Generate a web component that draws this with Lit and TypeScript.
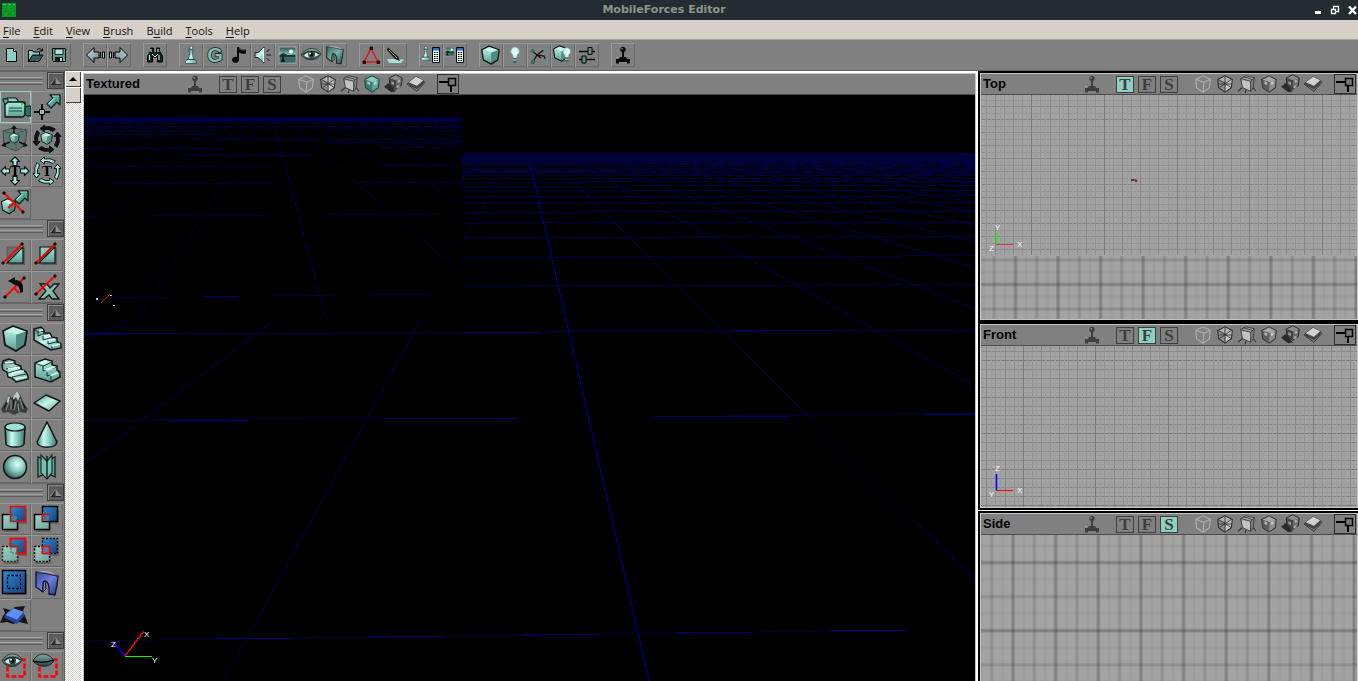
import { LitElement, html, svg, css, TemplateResult } from "lit";
import { customElement, state } from "lit/decorators.js";
import { classMap } from "lit/directives/class-map.js";

type Art = TemplateResult;
type Tool = { name: string; art: Art };

const K = "#101414";

/* ---------- shared shapes, drawn in a 32 unit box ---------- */

const cube = (a = "#c4f4ea", b = "url(#tealDown)", c = "#4f8c82") => svg`
  <path d="M4 8 14 3 28 8 17 12z" fill=${a}/>
  <path d="M4 8 17 12 17 28 6 22z" fill=${b}/>
  <path d="M17 12 28 8 26 22 17 28z" fill=${c}/>
  <path d="M4 8 14 3 28 8 26 22 17 28 6 22z" fill="none" stroke=${K} stroke-width="1.8" stroke-linejoin="round"/>`;

const pawn = svg`
  <circle cx="12" cy="5" r="2" fill="url(#ball)" stroke="#2c4a46" stroke-width=".6"/>
  <path d="M10 7h4v2h-1l1.500 7 3 2v2.500h-11V18l3-2L11 9h-1z" fill="url(#tealSide)" stroke="#2c4a46" stroke-width=".7"/>
  <path d="M8 16.500h8" stroke="#2c4a46"/>`;

const eye = svg`
  <path d="M2 12C6 4 18 3 22 11C18 18 8 19 2 12z" fill="url(#lid)" stroke="#1d2a29" stroke-width=".8"/>
  <path d="M5 12.500C8 9 16 8 20 11.500C16 15 9 16 5 12.500z" fill="#d7efeb"/>
  <circle cx="12.500" cy="11.500" r="3.400" fill="#2a3f3d"/><circle cx="12.500" cy="11.500" r="1.600" fill="#000"/>
  <circle cx="11" cy="10.500" r="1" fill="#fff"/>
  <path d="M4 11.500C8 7.500 16 7 20.500 11" fill="none" stroke="#1d2a29" stroke-width="1.200"/>`;

const arch = (fill: string, edge: string) => svg`
  <path d="M5 5Q16 6 27 9Q26 20 24 28L18 27Q19 15 14 14Q11 14 12 25L5 20z" fill=${fill} stroke=${edge} stroke-width="1.400" stroke-linejoin="round"/>
  <path d="M5 5Q13 3 20 5L27 9Q16 6 5 5z" fill="#fff" opacity=".35"/>
  <path d="M12 25 15 22Q14 17 15 14.500" fill="none" stroke=${edge}/>`;

const bulb = svg`
  <path d="M12 4a4.300 4.300 0 0 0-2.400 7.800L10.400 15h3.200l.8-3.200A4.300 4.300 0 0 0 12 4z" fill="#d2f5ee" stroke="#6da59c" stroke-width=".6"/>
  <path d="M10.500 8l1 4m2-4l-1 4" stroke="#fff"/><path d="M10 15h4v4l-2 2-2-2z" fill="#3c6b64"/><path d="M10 17h4" stroke="#a8d8d0"/>`;

const scene = svg`
  <path d="M4 4h17v16H4z" fill="url(#sky)" stroke="#a8a8a8"/>
  <circle cx="16" cy="8.500" r="2" fill="#e8fffb"/>
  <path d="M4.500 12l4-2 4 2 8-.5v3h-16z" fill="#1b3733"/><path d="M4.500 14.500h16V19.500h-16z" fill="#376a63"/>
  <path d="M6 19l2-7 2 7z" fill="#10201e"/>`;

const list = svg`
  <path d="M13.500 4.500h7v15h-7z" fill="#d9f4ef" stroke="#000"/><path d="M14 5h6v2.500h-6z" fill="#2a6fc4"/>
  <path d="M15 9.500h4.500M15 11.500h4.500M15 13.500h4.500M15 15.500h4.500M15 17.500h4.500" stroke="#000" stroke-dasharray="1.500 1"/>`;

const joystick = (c: string) => svg`
  <circle cx="12" cy="6.500" r="2.700" fill=${c}/><circle cx="11.200" cy="5.700" r=".8" fill="#a9a9a9"/>
  <path d="M11 8h2v7h-2z" fill=${c}/><path d="M9 14h6l1 2h3v4.500h-3V19H8v1.500H5V16h3z" fill=${c}/>
  <path d="M5 14.500h2" stroke="#6fb3a8" stroke-width="1.200"/>`;

const redLine = (x1: number, y1: number, x2: number, y2: number) => svg`
  <path d="M${x1} ${y1}L${x2} ${y2}" stroke="#f00" stroke-width="1.800"/>
  <path d="M${x1 - 1} ${y1 - 1}h2v2h-2zM${x2 - 1} ${y2 - 1}h2v2h-2z" fill="#a00" stroke="#000"/>`;

const arrowUpRight = svg`
  <path d="M19 4h10v10l-3-3-6 6-4-4 6-6z" fill="#4fa294" stroke="#0b1f1c" stroke-width="1.300" stroke-linejoin="round"/>
  <path d="M21 5h7M17.500 13l6-6" stroke="#9fe6da" stroke-width="1.200"/>`;

const backArrow = svg`
  <path d="M3.500 12 11 4.500V9h5v6h-5v4.500z" fill="url(#steel)" stroke="#000" stroke-linejoin="round"/>
  <path d="M17.500 9v6M19.500 9h2v6h-2z" fill="#9fd8ce" stroke="#000"/>`;

/* ---------- top toolbar ---------- */

const toolbarGroups: Tool[][] = [
  [
    { name: "New", art: svg`<path d="M7.500 5.500h7l3 3v10h-10z" fill="#8fd0c4" stroke="#000"/><path d="M14.500 5.500v3h3" fill="#d8f6f0" stroke="#000"/>` },
    { name: "Open", art: svg`<path d="M5.500 18.500v-11h4l1 1.500h6v3" fill="#8fd0c4" stroke="#000"/><path d="M5.500 18.500l4-6.500h10.500l-4 6.500z" fill="#365b55" stroke="#000"/><path d="M14 6.500q3-2.500 5 1m.500-2v2.500h-3" fill="none" stroke="#000"/>` },
    { name: "Save", art: svg`<path d="M5.500 5.500h13v13h-12l-1-1z" fill="#5f9c92" stroke="#000"/><path d="M8 6h8v5.500H8z" fill="#a5e2d7" stroke="#000" stroke-width=".8"/><path d="M8 14h8v4.500H8z" fill="#111"/><path d="M13 15h2v3h-2z" fill="#9fd8ce"/>` },
  ],
  [
    { name: "Undo", art: backArrow },
    { name: "Redo", art: svg`<g transform="translate(24 0) scale(-1 1)">${backArrow}</g>` },
  ],
  [
    { name: "Find", art: svg`<path d="M7.500 5h3v4l1 1h1l1-1V5h3v3l3 5v6h-5v-5h-5v5h-5v-6l3-5z" fill="#15201f" stroke="#000"/><path d="M8 6v3M15 6v3M6.500 12v5M16 12v5" stroke="#9fe0d5" stroke-width="1.200"/><path d="M9 11l3 3 3-3" stroke="#cfeee9" fill="none"/>` },
  ],
  [
    { name: "Actor browser", art: pawn },
    { name: "Group browser", art: svg`<text class="glyph" x="12" y="19" text-anchor="middle" font-size="20" fill="#7fbcb1" stroke="#111" stroke-width="1.400" paint-order="stroke">G</text>` },
    { name: "Music browser", art: svg`<path d="M10 4h2q1 3 7 2.500v4q-4 1-7-1V17a3.500 3 0 1 1-2-3z" fill="#0a0a0a"/><path d="M12 5.500q3 2 6 1.500" stroke="#40605b" fill="none"/>` },
    { name: "Sound browser", art: svg`<path d="M4 9.500h3L13 4v16l-6-5.500H4z" fill="url(#tealSide)" stroke="#1c2b29"/><path d="M12.500 5v14" stroke="#e9fffb" stroke-width="1.500"/><path d="M15.500 9l3-3M15.500 12h4.500M15.500 15l3 3" stroke="#111"/>` },
    { name: "Texture browser", art: scene },
    { name: "Mesh browser", art: eye },
    { name: "Static mesh browser", art: svg`<g transform="scale(.75)">${arch("url(#archTeal)", "#1c2b29")}</g>` },
  ],
  [
    { name: "2D shape editor", art: svg`<path d="M12 5.500 19 19H5z" fill="none" stroke="#e8141c" stroke-width="1.600"/><path d="M11 4h2.500v2.500H11zM4 18h2.500v2.500H4zM18 18h2.500v2.500H18z" fill="#400" stroke="#000" stroke-width=".8"/>` },
    { name: "UnrealScript editor", art: svg`<path d="M4 16h8l7 .5h2L18 20H6z" fill="#a9dcd2"/><path d="M5 4.500l10 9 2 4.500-5-2-8-9z" fill="#1a1a1a"/><path d="M6 7l8 8" stroke="#8a8a8a"/>` },
  ],
  [
    { name: "Actor properties", art: svg`<g transform="translate(-3 1) scale(.8)">${pawn}</g>${list}` },
    { name: "Surface properties", art: svg`<g transform="translate(0 2) scale(.55)">${scene}</g>${list}` },
  ],
  [
    { name: "Build geometry", art: svg`<g transform="translate(0 1) scale(.72)">${cube()}</g>` },
    { name: "Build lighting", art: bulb },
    { name: "Build paths", art: svg`<path d="M6 19l4-7 8-6M5 8l5 4 7 1 2 5M10 12l4 3" fill="none" stroke="#111" stroke-width="1.300"/><circle cx="5.500" cy="8" r="2" fill="#42685f"/><circle cx="18" cy="6" r="2.200" fill="#5f9185"/><circle cx="6" cy="19" r="2.200" fill="#42685f"/><circle cx="18.500" cy="18" r="2.200" fill="#5f9185"/>` },
    { name: "Build all", art: svg`<g transform="translate(0 1) scale(.62)">${cube()}</g><g transform="translate(5 1) scale(.9)">${bulb}</g>` },
    { name: "Build options", art: svg`<path d="M4 8.500h16M4 16.500h16" stroke="#000" stroke-width="1.600"/><path d="M13 4.500h4v7h-4zM7 13h4v7H7z" fill="#5c8f86" stroke="#000"/>` },
  ],
  [{ name: "Play map", art: joystick("#080808") }],
];

/* ---------- tool palette ---------- */

const clipBase = svg`<path d="M9 26h17V8z" fill="#444" opacity=".6"/><path d="M8 24 24 8v16z" fill="url(#tealDown)" stroke="#0c1514" stroke-width="1.200"/>`;

const squares = (back: Art, front: Art) => svg`<path d="M13 7h15v14h-8v8H5V14h8z" fill="#444" opacity=".45"/>${back}${front}`;
const blueBox = (edge: string, dash = "") => svg`<path d="M11.500 3.500h15v15h-15z" fill="url(#blue)" stroke=${edge} stroke-width="1.500" stroke-dasharray=${dash}/>`;
const tealBox = (edge: string, dash = "") => svg`<path d="M3.500 11.500h15v15h-15z" fill="url(#tealFlat)" stroke=${edge} stroke-width="1.500" stroke-dasharray=${dash}/>`;

const quadArrow = (rot: number) => svg`
  <path transform="rotate(${rot} 16 16)" d="M16 2l4.500 4.500h-2.500v4h-4v-4h-2.500z" fill="#a6eadd" stroke="#0c1514" stroke-width="1.200" stroke-linejoin="round"/>`;
const arcArrow = (rot: number, fill: string) => svg`
  <path transform="rotate(${rot} 16 16)" d="M22 8.500Q17 5.500 13.500 6.500V9L9 5.500 13.500 2v2Q19 2.500 24.500 6z" fill=${fill} stroke="#0c1514" stroke-width="1" stroke-linejoin="round"/>`;
const bigT = svg`<text class="serif" x="16" y="21" text-anchor="middle" font-size="15">T</text>`;
const shades = (d: string) => svg`<path d=${d} fill="none" stroke="#16302c" stroke-width="1"/>`;

const sections: Tool[][] = [
  [
    { name: "Camera movement", art: svg`<path d="M6 14V8l2-1h9l3 4h6v3" fill="#8fd0c4" stroke="#0c1514" stroke-width="1.200"/><path d="M4 8h5v6H6z" fill="#6aa89c" stroke="#0c1514"/><path d="M6 13.500l3-2.500h15l2 2v11l-2 2H6z" fill="url(#tealDown)" stroke="#0c1514" stroke-width="1.300" stroke-linejoin="round"/><path d="M10 17h13M10 20h13" stroke="#1f4a43"/><path d="M8 14v10" stroke="#d2f5ee"/><path d="M26 17l2-2h4v10h-4l-2-2z" fill="#2f6e64" stroke="#0c1514"/><path d="M22 12h2v2h-2z" fill="#0f0"/>` },
    { name: "Vertex editing", art: svg`${arrowUpRight}<path d="M11 13v5M11 24v5M3 21h5M14 21h5" stroke="#0a0a0a" stroke-width="2"/><path d="M8.500 18.500h5v5h-5z" fill="#7cc4b7" stroke="#000"/>` },
    { name: "Brush scaling", art: svg`<path d="M4 8 14 5 28 7 26 22 17 28 5 23z" fill="#54756f" opacity=".75" stroke="#2b3a38"/><path d="M4 8 17 11 28 7M17 11V28" fill="none" stroke="#3f5c58"/><path d="M15 14V4M20 19l7 3M11 19l-7 3" stroke="#111" stroke-width="1.600"/><path d="M12 6l3-4 3 4zM25 19l4 4-5 1zM6 19l-4 4 5 1z" fill="#111"/><g transform="translate(9 9) scale(.4)">${cube()}</g>` },
    { name: "Brush rotation", art: svg`${[0, 90, 180, 270].map((r) => arcArrow(r, "#101010"))}<g transform="translate(8 8) scale(.48)">${cube()}</g>` },
    { name: "Texture pan", art: svg`${[0, 90, 180, 270].map(quadArrow)}${bigT}` },
    { name: "Texture rotate", art: svg`${[0, 90, 180, 270].map((r) => arcArrow(r, "#a6eadd"))}${bigT}` },
    { name: "Face drag", art: svg`<g transform="translate(0 10) scale(.6)">${cube()}</g>${arrowUpRight}${redLine(5, 6, 24, 25)}<path d="M9 21l6-5" stroke="#f00" stroke-width="2"/>` },
  ],
  [
    { name: "Clip brush", art: svg`<path d="M8 8h14L8 22z" fill="#6c6c6c" stroke="#5a5a5a"/>${clipBase}${redLine(4, 24, 23, 5)}` },
    { name: "Split brush", art: svg`<path d="M9 8h13L9 21z" fill="url(#tealFlat)" stroke="#0c1514" stroke-width="1.200"/>${clipBase}${redLine(5, 24, 24, 5)}` },
    { name: "Flip clip normal", art: svg`${redLine(6, 26, 25, 7)}<path d="M15 17l5 5" stroke="#f00" stroke-width="1.800"/><path d="M9 10l7-4v3q8 0 8 8v4l-3 1q0-8-5-8v-1 1z" fill="#0b0b0b"/>` },
    { name: "Delete clip markers", art: svg`<path d="M9 13h7l3 4 4-4h5l-6 7 6 8h-7l-3-4-5 4H8l7-8z" fill="url(#tealFlat)" stroke="#0c1514" stroke-width="1.300"/>${redLine(5, 23, 24, 5)}` },
  ],
  [
    { name: "Cube", art: cube() },
    { name: "Linear staircase", art: svg`<path d="M3 6 10 4l3 3v3l6 0 2 4 5 1v3l4 3v4l-10 2L3 17z" fill="url(#tealSide)" stroke=${K} stroke-width="1.500"/>${shades("M3 6l4 3 6-1M7 9v4l5-2 7 0M12 13v4l7-2 6 0M17 18v3l8-2 4 1M21 23v3")}<path d="M8 8l4-1M13 13l6-1M18 17l6-1M21 23l8-2" stroke="#dffcf7" stroke-width="1.600"/>` },
    { name: "Spiral staircase", art: svg`<path d="M4 6 10 4l6 2 0 3 6 2 0 3 5 3 2 4 0 3-12 3-4-4-4-1-1-5-4-2-1-4z" fill="url(#tealSide)" stroke=${K} stroke-width="1.500"/>${shades("M4 8l12 0M7 14l15-3M9 18l14-4M13 22l14-3")}<path d="M6 8l8-1M9 14l11-2M13 18l12-2M17 24l11-2" stroke="#dffcf7" stroke-width="1.400"/>` },
    { name: "Curved staircase", art: svg`<path d="M4 8 14 4l7 2v4l5 1v4l3 2v5L20 27 4 22z" fill="url(#tealDown)" stroke=${K} stroke-width="1.500"/>${shades("M4 8l8 3 9-4M12 11v5l14-4M16 17v4l13-4M20 21v6")}<path d="M6 8l8-3 5 2-7 3zM13 15l8-4 4 1-8 4zM18 20l8-3 2 1-7 3z" fill="#d2f8f1"/>` },
    { name: "Terrain", art: svg`<path d="M2 22l5-8 3-6 3 3 5-7 4 5 2 6 5 7-2 4-6-1-6 3-6-3-5 1z" fill="#3a3f3e"/><path d="M14 10l4-6 3 5-2 5-2-4-3 3zM9 10l2-1-1 6-3 2z" fill="#b9c8c5"/><path d="M17 14l-2 9M21 12l3 10M10 15l-3 8M12 13l0 10M19 17l1 8" stroke="#808a88" stroke-width="1.200"/><path d="M15 12l-1 10M23 14l3 7M8 15l-3 6" stroke="#0c0c0c"/>` },
    { name: "Sheet", art: svg`<path d="M3 16 15 8l14 6-11 10z" fill="url(#tealSide)" stroke=${K} stroke-width="1.500" stroke-linejoin="round"/>` },
    { name: "Cylinder", art: svg`<path d="M6 8l1 17c2 4 16 4 18 0l1-17z" fill="url(#tealRound)" stroke=${K} stroke-width="1.500"/><ellipse cx="16" cy="8" rx="10" ry="4" fill="#9fe0d4" stroke=${K} stroke-width="1.200"/>` },
    { name: "Cone", art: svg`<path d="M16 3 6 23c1 7 19 7 20 0z" fill="url(#tealRound)" stroke=${K} stroke-width="1.500" stroke-linejoin="round"/>` },
    { name: "Sphere", art: svg`<circle cx="16" cy="16" r="11.500" fill="url(#ball)" stroke=${K} stroke-width="1.500"/>` },
    { name: "Volumetric", art: svg`<path d="M7 6l9 4 8-4v20l-8-4-9 4z" fill="#5b9e92" stroke="#0c1514" stroke-width="1.200"/><path d="M10 4l6 6 5-6v18l-5 6-6-6z" fill="#7fcabc" opacity=".8" stroke="#0c1514" stroke-width="1.200"/><path d="M16 5v23" fill="none" stroke="#0c1514" stroke-width="1.300"/>` },
  ],
  [
    { name: "Add", art: svg`${squares(tealBox("#000"), blueBox("#f00"))}<path d="M12 12h6v6h-6z" fill="#4580a0" stroke="#1d4f6e" stroke-dasharray="2 1"/>` },
    { name: "Subtract", art: svg`${squares(tealBox("#000"), blueBox("#000"))}<path d="M12 12h6v6h-6z" fill="#3c7a99"/><path d="M18.500 11.500h-7v7" fill="none" stroke="#f00" stroke-width="1.500"/>` },
    { name: "Intersect", art: svg`${squares(blueBox("#f00"), tealBox("#222", "2 1.500"))}<path d="M11.500 11.500v-8h15v15h-8v-7z" fill="none" stroke="#f00" stroke-width="1.600"/><path d="M12 12h6v6h-6z" fill="none" stroke="#2d6d63" stroke-dasharray="2 1"/>` },
    { name: "Deintersect", art: svg`${squares(tealBox("#000", "2 1.500"), blueBox("#000", "2 1.500"))}<path d="M11.500 11.500h7v7h-7z" fill="#3f87a8" stroke="#f00" stroke-width="1.600"/>` },
    { name: "Special brush", art: svg`<path d="M6 6h22v22H6z" fill="#444" opacity=".6"/><path d="M3.500 3.500h23v23h-23z" fill="url(#blue)" stroke="#000" stroke-width="1.500"/><path d="M8.500 8.500h13v13h-13z" fill="none" stroke="#000" stroke-width="1.300" stroke-dasharray="2.500 1.500"/>` },
    { name: "Add static mesh", art: arch("url(#archBlue)", "#15153a") },
    { name: "Add mover", art: svg`<path d="M4 9l7 2 5-3 10-1-2 5 4 10 1 3-9-2-6 2-6-2-7 1 3-7 2-3z" fill="#151515"/><path d="M6 16l8-7 11 4-7 8z" fill="#5c8ef0"/><path d="M6 16l12 5v4L6 19zM18 21l7-8v4l-7 8z" fill="#234aa8"/>` },
  ],
  [
    { name: "Show selected", art: svg`<path d="M8.500 8.500h17v17h-17z" fill="none" stroke="#f00" stroke-width="2.600" stroke-dasharray="5 2"/><g transform="translate(1 -3) scale(1 1.100)">${eye}</g>` },
    { name: "Hide selected", art: svg`<path d="M8.500 8.500h17v17h-17z" fill="none" stroke="#f00" stroke-width="2.600" stroke-dasharray="5 2"/><path d="M2 10C6 1 18 1 23 10C18 17 8 17 2 10z" fill="url(#lid)" stroke="#1d2a29"/><path d="M2 10Q12 13 23 9" fill="none" stroke="#0c1514" stroke-width="1.500"/>` },
  ],
];

/* ---------- viewport mode icons, 22 unit box ---------- */

const hex = "M3 6 11 2 19 6 18 15 11 20 4 15z";
const solid = (a: string, b: string, c: string, edge: string) => svg`
  <path d="M3 6 11 2 19 6 12 9z" fill=${a}/><path d="M3 6l9 3-1 11-7-5z" fill=${b}/><path d="M12 9l7-3-1 9-7 5z" fill=${c}/>
  <path d=${hex} fill="none" stroke=${edge} stroke-width="1.200"/>`;

const modes: { name: string; art: (on: boolean) => Art }[] = [
  { name: "Wireframe", art: () => svg`<path d="${hex}M3 6l9 3 7-3M12 9l-1 11" fill="none" stroke="#adadad" stroke-width="1.300"/>` },
  { name: "Zone portals", art: () => svg`${solid("#b5b5b5", "#8e8e8e", "#c9c9c9", "#2e2e2e")}<path d="M11 3v16M4 6l14 9M18 6L5 15M4 11h14" stroke="#333"/>` },
  { name: "Texture usage", art: () => svg`<path d="M7 14l-6 5M17 14l4 5M10 17l-1 4" stroke="#333" stroke-width="1.200"/><path d="M4 5l6-3 9 2-4 4-10-1z" fill="#a0a0a0"/><path d="M5 7l10 1v11l-9-4z" fill="#c2c2c2"/><path d="M15 8l4-4-1 10-3 5z" fill="#7d7d7d"/><path d="M4 5l6-3 9 2-1 11-3 4-9-4zM4 5l11 3 4-4M15 8v11M7 3l10 3" fill="none" stroke="#3c3c3c"/>` },
  { name: "Dynamic light", art: (on) => svg`${on ? solid("#8ad0c3", "#3c7e72", "#5fa597", "#26453f") : solid("#a8a8a8", "#5f5f5f", "#8d8d8d", "#3c3c3c")}<path d="M6 8l3 1v3l-3-1zM13 9l3-1v3l-3 1z" fill="#fff" opacity=".55"/>` },
  { name: "Textured", art: () => svg`<path d="M0 14l5-4 8 9-5 1z" fill="#2a2a2a"/><g transform="translate(3 -1) scale(.9)">${solid("#8c8c8c", "#454545", "#666", "#2a2a2a")}</g><path d="M8 8l3 1v3l-3-1zM15 7l3-1v3l-3 1zM14 13l3-1v3l-3 1z" fill="#fff" opacity=".45"/>` },
  { name: "Depth complexity", art: () => svg`<path d="M1 11l9-5 11 3-9 10z" fill="#7b7b7b" stroke="#333"/><path d="M3 9l8-6 8 4-1 4-6 5-8-4z" fill="#4a4a4a" stroke="#333"/><path d="M3 9l8-6 8 4-7 6z" fill="#d0d0d0"/>` },
];

/* ---------- grid canvases ---------- */

type Rule = { start: number; step: number; cycle: string[] };

const rules = (dir: "v" | "h", r: Rule, from: number, to: number, lo: number, hi: number) => {
  const out: Art[] = [];
  const first = Math.ceil((from - r.start) / r.step);
  for (let i = first; r.start + i * r.step < to; i++) {
    const at = Math.round(r.start + i * r.step);
    const n = r.cycle.length;
    const tone = r.cycle[((i % n) + n) % n];
    out.push(
      dir === "v"
        ? svg`<rect x=${at} y=${lo} width="1" height=${hi - lo} fill=${tone}/>`
        : svg`<rect x=${lo} y=${at} width=${hi - lo} height="1" fill=${tone}/>`
    );
  }
  return out;
};

const softRules = (dir: "v" | "h", start: number, step: number, from: number, to: number, lo: number, hi: number) => {
  const out: Art[] = [];
  for (let i = Math.ceil((from - start) / step); start + i * step < to; i++) {
    const at = start + i * step;
    const rank = ((i % 4) + 4) % 4;
    const alpha = rank === 0 ? 0.11 : rank === 2 ? 0.06 : 0.015;
    for (const w of [2, 4]) {
      out.push(
        dir === "v"
          ? svg`<rect x=${at - w / 2} y=${lo} width=${w} height=${hi - lo} fill="#000" opacity=${alpha}/>`
          : svg`<rect x=${lo} y=${at - w / 2} width=${hi - lo} height=${w} fill="#000" opacity=${alpha}/>`
      );
    }
  }
  return out;
};

const MINOR = "#9b9b9b", MID = "#929292", MAJOR = "#868686", DARK = "#7a7a7a";
const fineCycle = [DARK, MINOR, MID, MINOR, MAJOR, MINOR, MID, MINOR, MAJOR, MINOR, MID, MINOR, MAJOR, MINOR, MID, MINOR];
const W = 1600;

const axis = (up: string, upName: string, right: string, hidden: string, oy: number, len: number) => svg`
  <path d="M15.500 ${oy}v-${len}" stroke=${up} stroke-width="1.500"/><path d="M15 ${oy + 0.5}h17" stroke=${right}/>
  <text class="tag" x="14" y=${oy - len - 3}>${upName}</text><text class="tag" x="36" y=${oy + 3}>X</text><text class="tag" x="8" y=${oy + 7}>${hidden}</text>`;

const topCanvas = svg`
  ${rules("h", { start: 24, step: 3.25, cycle: [MAJOR, "#a0a0a0", MID, "#a0a0a0"] }, 0, 160, 0, W)}
  ${rules("v", { start: 123, step: 4.54, cycle: fineCycle }, 0, W, 0, 160)}
  ${softRules("h", 189.5, 12.25, 161, 225, 0, W)}${softRules("v", 34.5, 10.64, 0, W, 161, 225)}
  ${axis("#0f0", "Y", "#d43c3c", "Z", 149, 11)}
  <path d="M150 85h3m1 1h2" stroke="#223" stroke-width="1.500"/><path d="M153 84l4 1-3 2z" fill="#a01818"/>`;

const frontCanvas = svg`
  ${rules("h", { start: 123, step: 4.53, cycle: [DARK, MINOR, MAJOR, MINOR, MAJOR, MINOR, MAJOR, MINOR] }, 0, 400, 0, W)}
  ${rules("v", { start: 187, step: 4.54, cycle: fineCycle }, 0, W, 0, 400)}
  ${axis("#00f", "Z", "#f00", "Y", 144, 16)}`;

const sideCanvas = svg`${softRules("h", 27.7, 17, 0, 500, 0, W)}${softRules("v", 32, 10.66, 0, W, 0, 500)}`;

/* Perspective ground grid: rays leave a vanishing point, cross lines shrink with 1/depth. */
const rays = (vx: number, vy: number, first: number, step: number, lo: number, hi: number, y0: number, y1: number, tone: string) => {
  const out: Art[] = [];
  for (let k = lo; k <= hi; k++) {
    const s = first + step * k;
    out.push(svg`<path d="M${vx + s * (y0 - vy)} ${y0}L${vx + s * (y1 - vy)} ${y1}" stroke=${tone}/>`);
  }
  return out;
};

const crossLines = () => {
  const out: Art[] = [];
  for (let j = 2; j < 28; j++) {
    const d = 1 / (0.002 + 0.001495 * j);
    const y = 37 + d;
    out.push(svg`<path d="M0 ${y + d * 0.009}L1900 ${y - d * 0.036}" stroke="#000040"/>`);
  }
  return out;
};

const segs = (tone: string, list: number[][]) =>
  list.map(([x1, y1, x2, y2]) => svg`<path d="M${x1} ${y1}L${x2} ${y2 ?? y1}" stroke=${tone}/>`);

const perspective = svg`
  <defs>
    <clipPath id="near"><path d="M378 58H2000V2000H0V225H378z"/></clipPath>
    <clipPath id="stale"><path d="M0 22h378v203H0z"/></clipPath>
  </defs>
  <g clip-path="url(#near)" fill="none">
    ${crossLines()}
    ${rays(439, 37, 0.2304, 0.7755, 2, 40, 62, 900, "#000040")}
    ${rays(439, 37, 0.2304, 0.7755, -3, 1, 68, 900, "#00003c")}
    <path d="M446 68L565 586" stroke="#000084"/>
    <path d="M378 58h1600v8H378z" fill="#00003c"/>
    ${segs("#000030", [[0, 326, 300, 322], [560, 322, 891, 318], [0, 546, 824, 535]])}
    ${segs("#000078", [[132, 544, 208, 543], [285, 542, 361, 541], [438, 540, 515, 539], [592, 538, 669, 537], [746, 536, 824, 535],
      [84, 325, 164, 325], [300, 324, 434, 323], [570, 322, 706, 321], [840, 319, 891, 319], [0, 239, 95, 238], [378, 237, 455, 237], [650, 235, 750, 235]])}
  </g>
  <g clip-path="url(#stale)" fill="none">
    ${rays(186, 12.5, 0.263, 0.89, -12, -3, 26, 120, "#000026")}
    ${rays(186, 12.5, 0.263, 0.89, -2, 2, 34, 226, "#000026")}
    ${rays(186, 12.5, 0.263, 0.89, 3, 14, 28, 80, "#000026")}
    <path d="M190 26L242 225" stroke="#000052" stroke-dasharray="9 5"/>
    <path d="M0 22h378v4.500H0z" fill="#00003c"/>
    <path d="M0 28h378M0 31h378" stroke="#000036" stroke-dasharray="14 3"/>
    <path d="M0 34h378" stroke="#00002c" stroke-dasharray="9 6"/>
    ${segs("#000034", [[0, 39, 170], [113, 44, 378], [0, 36, 130], [240, 47, 378], [0, 53, 139], [296, 52, 378], [95, 60, 227], [0, 71, 185], [295, 70, 378], [26, 88, 192], [274, 87, 378],
      [0, 121, 12], [70, 120, 184], [242, 119, 357], [24, 202, 87], [186, 200, 251], [284, 199, 349]])}
    ${segs("#000084", [[121, 201, 154]])}
  </g>
  <path d="M17 208l-4-4" stroke="#00a"/><path d="M17 208l9-9" stroke="#d00" stroke-width="1.200"/>
  <path d="M12 203h2v2h-2zM29 210h2v1h-2zM26 200h2v1h-2z" fill="#ccc"/>
  <path d="M41 561l-12-14" stroke="#00f" stroke-width="1.300"/><path d="M41 561l19-25" stroke="#f00" stroke-width="1.300"/><path d="M41 561.500h27" stroke="#0f0" stroke-width="1"/>
  <text class="tag" x="60" y="542">X</text><text class="tag" x="27" y="552">Z</text><text class="tag" x="68" y="568">Y</text>`;

const views = [
  { title: "Textured", letter: "", mode: 3, art: perspective, cls: "main" },
  { title: "Top", letter: "T", mode: -1, art: topCanvas, cls: "top" },
  { title: "Front", letter: "F", mode: -1, art: frontCanvas, cls: "front" },
  { title: "Side", letter: "S", mode: -1, art: sideCanvas, cls: "side" },
];

const gradient = (id: string, x2: number, y2: number, stops: string[]) => svg`
  <linearGradient id=${id} x2=${x2} y2=${y2}>${stops.map((c, i) => svg`<stop offset=${i / (stops.length - 1)} stop-color=${c}/>`)}</linearGradient>`;

const gradients = [
  gradient("tealDown", 0, 1, ["#a9eadd", "#5a9c90"]),
  gradient("tealFlat", 1, 1, ["#9fd2c8", "#6fa599"]),
  gradient("tealSide", 1, 1, ["#4d8278", "#c6f8ee", "#5b9589"]),
  gradient("tealRound", 1, 0, ["#3f7e73", "#c8fbf1", "#7fc2b5", "#3b6f66"]),
  gradient("steel", 1, 1, ["#c4dcda", "#6c8a88"]),
  gradient("sky", 0, 1, ["#2c504c", "#8cc4bb", "#447a72"]),
  gradient("blue", 1, 1, ["#2f8ad0", "#123f7c"]),
  gradient("lid", 0, 1, ["#86aaa6", "#29403d"]),
  gradient("archTeal", 1, 1, ["#3c6b66", "#76b0a7", "#24403d"]),
  gradient("archBlue", 1, 1, ["#3d46a0", "#7080e0", "#2a2f7a"]),
];

const menus = ["File", "Edit", "View", "Brush", "Build", "Tools", "Help"];

@customElement("app-root")
export class AppRoot extends LitElement {
  @state() private tool = "Camera movement";

  static styles = css`
    :host { display: block; font-family: "Liberation Sans", Arial, sans-serif; }
    * { box-sizing: border-box; }
    button { appearance: none; border: 0; margin: 0; padding: 0; background: none; color: inherit; font: inherit; display: block; }
    svg { display: block; }
    .defs { position: absolute; width: 0; height: 0; }
    .app { display: flex; flex-direction: column; height: 100vh; overflow: hidden; background: #808080; }

    .title { display: flex; align-items: center; height: 20px; flex: none; background: #232d31; color: #8f958c; }
    .logo { width: 20px; padding-left: 2px; }
    h1 { flex: 1; margin: 0; font: bold 11px/18px "DejaVu Sans", sans-serif; text-align: center; }
    .controls { display: flex; width: 50px; padding-left: 1px; }

    .menu { display: flex; gap: 13px; height: 19px; flex: none; padding-left: 3px; background: #d6d0c8; color: #111; }
    .menu button { font: 11px/22px "Open Sans", "Noto Sans", sans-serif; }
    .menu u { text-underline-offset: 2px; }

    .toolbar { display: flex; align-items: flex-start; gap: 12px; height: 32px; flex: none; padding-top: 3px; margin-left: -1px; border-top: 1px solid #a0a0a0; border-bottom: 1px solid #5f5f5f; }
    .group { display: flex; }
    .group button, .tools button { box-shadow: inset 1px 1px #999, inset -1px -1px #686868; }

    .work { flex: 1; min-height: 0; display: grid; grid-template-columns: 65px 16px minmax(0, 1fr) 380px; grid-template-rows: minmax(0, 1fr); }
    .palette { overflow: hidden; border-right: 1px solid #5f5f5f; }
    .fold { display: flex; align-items: flex-start; justify-content: space-between; height: 20px; border-top: 1px solid #666; }
    .grooves { display: grid; gap: 2px; width: 43px; padding-top: 5px; }
    .grooves i { height: 3px; background: #808080; border-top: 1px solid #a2a2a2; border-bottom: 1px solid #5c5c5c; }
    .fold button { width: 17px; height: 17px; background: #5c5c5c; border: 1px solid #3c3c3c; box-shadow: inset 1px 1px #8d8d8d; }
    .tools { display: grid; grid-template-columns: 32px 32px; margin-left: -1px; }
    .tools .on { box-shadow: inset 2px 1px #8fd0c4, inset -1px -1px #8fd0c4; }

    .scroll { background: repeating-conic-gradient(#fff 0 25%, #d2cdc4 0 50%) 0 0 / 2px 2px; }
    .scroll button { width: 16px; height: 16px; background: #d6d0c8; box-shadow: inset 1px 1px #fff, inset -1px -1px #404040; }

    .stack { display: grid; grid-template-rows: 251fr 188fr 171fr; background: #fff; min-height: 0; }
    .view { display: flex; flex-direction: column; min-width: 0; min-height: 0; background: #808080; border: 2px solid #000; border-right-width: 0; }
    .view.main { border-color: #fff; border-width: 2px 2px 0; }
    .view.side { margin-top: 1px; border-bottom-width: 0; }
    .frame { flex: 1; min-height: 0; display: flex; flex-direction: column; border: 1px solid #c4c4c4; }
    .main .frame, .side .frame { border-bottom: 0; }
    .bar { display: flex; align-items: center; height: 21px; flex: none; border-bottom: 1px solid #4c4c4c; }
    h2 { flex: 0 0 100px; margin: 0; padding-left: 2px; font-size: 13px; line-height: 20px; color: #000; }
    .letters { display: flex; gap: 4px; padding: 0 14px 0 13px; }
    .letters button { width: 18px; height: 17px; border: 1px solid #3e3e3e; color: #3e3e3e; font: bold 17px/15px "Liberation Serif", serif; text-align: center; }
    .letters .on { background: #8fd0c4; }
    .modes { display: flex; padding-right: 10px; }
    .pin { width: 22px; height: 20px; border: 1px solid #303030; }
    .canvas { flex: 1; min-height: 0; overflow: hidden; background: #a3a3a3; }
    .canvas svg { width: 100%; height: 100%; }
    .main .canvas { background: #000; }
    .main .canvas svg { shape-rendering: crispEdges; }
    .tag { font: 8px "Liberation Sans", sans-serif; fill: #fff; }
    .glyph { font-family: "Liberation Sans", sans-serif; font-weight: bold; }
    .serif { font-family: "Liberation Serif", serif; font-weight: bold; }
  `;

  private icon(size: number, art: Art) {
    return html`<svg width=${size} height=${size} viewBox="0 0 ${size} ${size}" aria-hidden="true">${art}</svg>`;
  }

  private view(v: (typeof views)[number]) {
    return html`
      <section class="view ${v.cls}">
        <div class="frame">
          <header class="bar">
            <h2>${v.title}</h2>
            <button aria-label="Realtime preview">
              <svg width="22" height="20" viewBox="1 2 22 20" aria-hidden="true">${joystick("#3e3e3e")}</svg>
            </button>
            <div class="letters">
              ${["T", "F", "S"].map((l) => html`<button class=${classMap({ on: l === v.letter })}>${l}</button>`)}
            </div>
            <div class="modes">
              ${modes.map((m, i) => html`<button aria-label=${m.name}><svg width="22" height="20" viewBox="0 0 22 22" aria-hidden="true">${m.art(i === v.mode)}</svg></button>`)}
            </div>
            <button class="pin" aria-label="Maximize">
              <svg width="20" height="18" viewBox="0 0 20 18" aria-hidden="true">
                <path d="M1 7h9" stroke="#000" stroke-width="2"/><path d="M13 11v6" stroke="#000" stroke-width="2"/>
                <path d="M10.500 3.500h7v7h-7z" fill="#777" stroke="#000" stroke-width="1.500"/>
              </svg>
            </button>
          </header>
          <div class="canvas"><svg aria-label="${v.title} view" role="img">${v.art}</svg></div>
        </div>
      </section>`;
  }

  render() {
    return html`
      <svg class="defs" aria-hidden="true"><defs>
        ${gradients}
        <radialGradient id="ball" cx=".6" cy=".38" r=".65"><stop offset="0" stop-color="#e4fffa"/><stop offset=".45" stop-color="#8fd0c4"/><stop offset="1" stop-color="#2f5f57"/></radialGradient>
      </defs></svg>
      <div class="app">
        <header class="title">
          <div class="logo">
            <svg width="14" height="14" viewBox="0 0 14 14" aria-hidden="true">
              <path d="M0 0h14v14H0z" fill="#0a9a22"/><path d="M1 1.500h3m2 0h3m2 0h2" stroke="#2cc878"/>
              <path d="M0 5.500h4m3 0h4M2 8.500h3m4 0h5M0 11.500h2m3 0h4m3 0h2" stroke="#07861a"/><path d="M2 4v3m5-4v4m4 1v4M4 9v4" stroke="#17b232"/>
            </svg>
          </div>
          <h1>MobileForces Editor</h1>
          <div class="controls">
            <button aria-label="Minimize"><svg width="16" height="18"><path d="M6 10h6v3H6z" fill="#fff"/></svg></button>
            <button aria-label="Restore"><svg width="17" height="18"><path d="M8.500 8V5.500h5v5H11M6.500 8.500h4v4h-4z" fill="none" stroke="#fff" stroke-width="1.300"/></svg></button>
            <button aria-label="Close"><svg width="16" height="18"><path d="M7 5.500l7 7.500M14 5.500L7 13" stroke="#fff" stroke-width="2.400"/></svg></button>
          </div>
        </header>
        <nav class="menu">
          ${menus.map((m) => (m === "Build" ? html`<button>B<u>u</u>ild</button>` : html`<button><u>${m[0]}</u>${m.slice(1)}</button>`))}
        </nav>
        <div class="toolbar" role="toolbar">
          ${toolbarGroups.map((g) => html`<div class="group">${g.map((t) => html`<button aria-label=${t.name}>${this.icon(24, t.art)}</button>`)}</div>`)}
        </div>
        <div class="work">
          <aside class="palette">
            ${sections.map((s) => html`
              <div class="fold">
                <div class="grooves"><i></i><i></i></div>
                <button aria-label="Collapse"><svg width="15" height="15"><path d="M2 11L7.500 4l5.500 7z" fill="#909090"/><path d="M3.500 11L7.500 4.500V11z" fill="#2e2e2e"/><path d="M3 11.500h10" stroke="#222"/></svg></button>
              </div>
              <div class="tools">
                ${s.map((t) => html`<button aria-label=${t.name} class=${classMap({ on: t.name === this.tool })} @click=${() => (this.tool = t.name)}>${this.icon(32, t.art)}</button>`)}
              </div>`)}
          </aside>
          <div class="scroll">
            <button aria-label="Scroll up"><svg width="16" height="16"><path d="M4 10h8L8 6z" fill="#000"/></svg></button>
            <button aria-label="Scroll position"></button>
          </div>
          ${this.view(views[0])}
          <div class="stack">${views.slice(1).map((v) => this.view(v))}</div>
        </div>
      </div>`;
  }
}
